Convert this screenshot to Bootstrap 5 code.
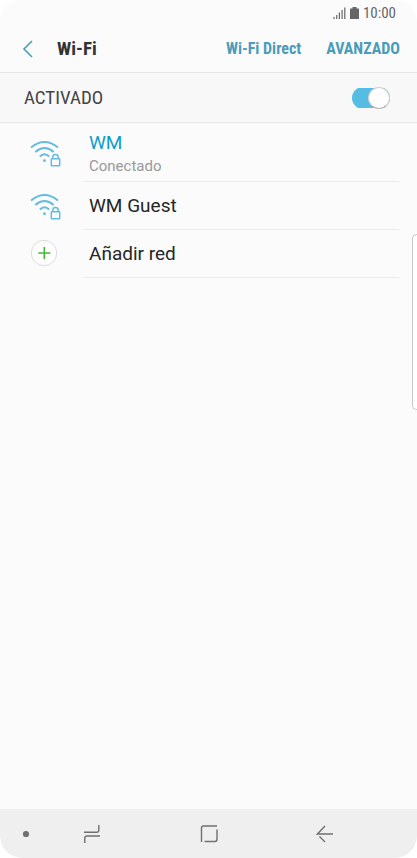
<!DOCTYPE html>
<html lang="es">
<head>
<meta charset="utf-8">
<meta name="viewport" content="width=device-width, initial-scale=1">
<title>Wi-Fi</title>
<link href="https://cdn.jsdelivr.net/npm/bootstrap@5.3.0/dist/css/bootstrap.min.css" rel="stylesheet">
<style>
  body { font-family: Roboto, sans-serif; background: #fff; color: #262626; }
  .screen { background: #fbfbfb; border-radius: 22px; position: relative; }
  .condensed { font-family: "Roboto Condensed", Roboto, sans-serif; }
  .status { height: 26px; padding-right: 21px; font-size: 15px; line-height: 26px; color: #666; }
  .topbar { height: 47px; padding: 0 17px 0 21px; border-bottom: 1px solid #e6e6e6; }
  .topbar h1 { font-size: 19px; line-height: 24px; color: #333; margin-left: 21px; }
  .topbar a { font-size: 16px; line-height: 24px; color: #4a9cba; }
  .topbar nav { gap: 25px; }
  .state { height: 50px; padding: 0 27px 0 24px; background: #f8f8f8; border-bottom: 1px solid #e6e6e6; }
  .state label { font-size: 19px; line-height: 24px; color: #444; }
  .toggle.form-check-input { appearance: none; width: 38px; height: 22px; margin: 0; border: 0; border-radius: 11px; position: relative;
    background: linear-gradient(#55bde3, #55bde3) center / 38px 20px no-repeat; }
  .toggle.form-check-input::before { content: ""; display: block; width: 22px; height: 22px; margin-left: auto; border-radius: 50%;
    background: #fff; border: 1px solid #cfcfcf; border-bottom-color: #b5b5b5; }
  .toggle.form-check-input:not(:checked)::before { margin-left: 0; }
  .networks a { padding-left: 30px; padding-right: 18px; color: inherit; }
  .entry { min-height: 48px; padding-left: 6px; border-bottom: 1px solid #ebebeb; }
  .entry.linked { min-height: 59px; padding-top: 3px; }
  .name { font-size: 19px; line-height: 24px; }
  .linked .name { color: #0d9dcc; }
  .note { font-size: 15px; line-height: 22px; color: #999; }
  .glyph { width: 53px; }
  .edge { position: absolute; right: 0; top: 234px; width: 5px; height: 176px; border: 1px solid #c8c8c8; border-right: 0; border-radius: 6px 0 0 6px; background: #fff; }
  .keys { height: 49px; background: #efefef; border-radius: 0 0 22px 22px; padding-left: 22px; color: #707070; }
  .keys button { line-height: 0; color: inherit; }
  .main-keys { margin-left: 53px; padding-right: 21%; }
  svg { display: block; fill: none; stroke: currentColor; }
</style>
</head>
<body>
<svg width="0" height="0" class="position-absolute" aria-hidden="true">
  <symbol id="wifi" viewBox="0 0 31 28">
    <g stroke="#65bce0" stroke-width="1.9">
      <path d="M1 8.500Q14.500-2.500 28 8.500M5.300 13Q14.500 5.200 23.700 13M9.800 17.500Q14.500 13 19.200 17.500"/>
      <circle cx="14.5" cy="21.7" r="1.4" fill="#65bce0" stroke="none"/>
      <rect x="21.3" y="19.8" width="8.4" height="7" rx=".6" stroke-width="1.5"/>
      <path d="M22.800 19.500v-1.200a2.700 2.700 0 0 1 5.400 0v1.200" stroke-width="1.5"/>
    </g>
  </symbol>
</svg>
<div class="screen min-vh-100 d-flex flex-column overflow-hidden">
  <div class="status condensed d-flex align-items-center justify-content-end">
    <svg class="me-1" width="13" height="12" viewBox="0 0 13 12" stroke-width="1.2" aria-hidden="true"><path d="M1 10v2M3.700 8v4M6.400 5.500V12M9.100 3v9M11.800.5V12"/></svg>
    <svg class="me-1" width="9" height="12" viewBox="0 0 9 12" aria-hidden="true"><path d="M2.500 0h4v1.500H9V12H0V1.500h2.500z" fill="currentColor" stroke="none"/></svg>
    <span>10:00</span>
  </div>
  <header class="topbar condensed d-flex align-items-center">
    <button class="btn p-0 border-0" type="button" aria-label="Atrás"><svg width="15" height="18" viewBox="0 0 15 18"><path d="M11 1 3 9l8 8" stroke="#4a9cba" stroke-width="1.6"/></svg></button>
    <h1 class="fw-bold mb-0">Wi-Fi</h1>
    <nav class="d-flex ms-auto">
      <a href="#" class="fw-bold text-decoration-none">Wi-Fi Direct</a>
      <a href="#" class="fw-bold text-decoration-none">AVANZADO</a>
    </nav>
  </header>
  <div class="state condensed d-flex align-items-center justify-content-between">
    <label for="wifi-on">ACTIVADO</label>
    <input class="toggle form-check-input shadow-none" id="wifi-on" type="checkbox" role="switch" checked>
  </div>
  <main class="flex-grow-1">
    <ul class="networks list-unstyled mb-0">
      <li><a href="#" class="d-flex align-items-center text-decoration-none">
        <span class="glyph"><svg width="31" height="28" aria-hidden="true"><use href="#wifi"/></svg></span>
        <span class="entry linked flex-grow-1 d-flex flex-column justify-content-center"><span class="name">WM</span><span class="note">Conectado</span></span>
      </a></li>
      <li><a href="#" class="d-flex align-items-center text-decoration-none">
        <span class="glyph"><svg width="31" height="28" aria-hidden="true"><use href="#wifi"/></svg></span>
        <span class="entry name flex-grow-1 d-flex align-items-center">WM Guest</span>
      </a></li>
      <li><a href="#" class="d-flex align-items-center text-decoration-none">
        <span class="glyph"><svg width="28" height="28" viewBox="0 0 28 28" aria-hidden="true"><circle cx="14" cy="13" r="12.7" fill="#fff" stroke="#dcdcdc"/><path d="M14.300 7v12M8.300 13h12" stroke="#45b83a" stroke-width="1.6"/></svg></span>
        <span class="entry name flex-grow-1 d-flex align-items-center">Añadir red</span>
      </a></li>
    </ul>
  </main>
  <div class="edge"></div>
  <footer class="keys d-flex align-items-center">
    <button class="btn p-0 border-0" type="button" aria-label="Ocultar barra"><svg width="8" height="8"><circle cx="4" cy="4" r="3.1" fill="currentColor" stroke="none"/></svg></button>
    <div class="main-keys flex-grow-1 d-flex align-items-center justify-content-between">
      <button class="btn p-0 border-0" type="button" aria-label="Recientes"><svg width="18" height="20" viewBox="0 0 18 20" stroke-width="1.4"><path d="M1 8.300h12.800q2 0 2-2V1M17 12H4q-2.200 0-2.200 2v5"/></svg></button>
      <button class="btn p-0 border-0" type="button" aria-label="Inicio"><svg width="18" height="18" viewBox="0 0 18 18" stroke-width="1.4"><path d="M1.500 17V3q0-2 2-2H17M17 4.500V14q0 2.500-2 2.500H4.500"/></svg></button>
      <button class="btn p-0 border-0" type="button" aria-label="Volver"><svg width="18" height="18" viewBox="0 0 18 18" stroke-width="1.4"><path d="M17 9H1.500L9 1M3.500 11.500 9 17"/></svg></button>
    </div>
  </footer>
</div>
<script src="https://cdn.jsdelivr.net/npm/bootstrap@5.3.0/dist/js/bootstrap.bundle.min.js"></script>
</body>
</html>
